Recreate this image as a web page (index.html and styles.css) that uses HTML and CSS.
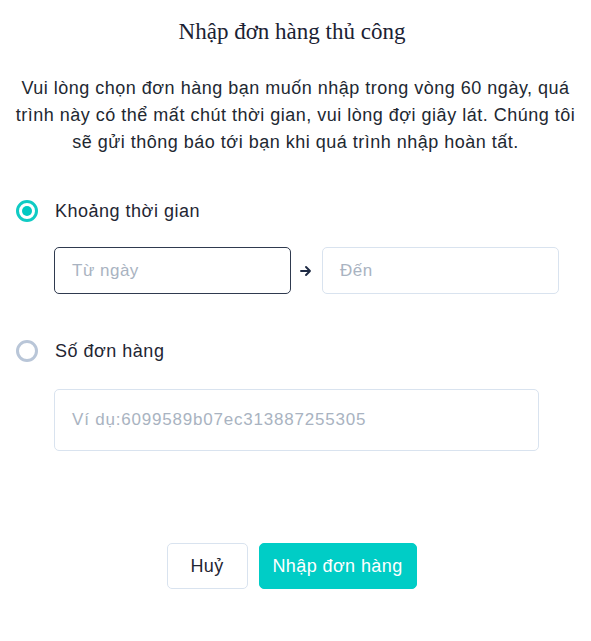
FILE: index.html
```html
<!DOCTYPE html>
<html lang="vi">
<head>
<meta charset="utf-8">
<link rel="stylesheet" href="styles.css">
</head>
<body>
<div class="dialog">
  <h1 class="title">Nhập đơn hàng thủ công</h1>
  <p class="desc">Vui lòng chọn đơn hàng bạn muốn nhập trong vòng 60 ngày, quá trình này có thể mất chút thời gian, vui lòng đợi giây lát. Chúng tôi sẽ gửi thông báo tới bạn khi quá trình nhập hoàn tất.</p>

  <div class="option">
    <span class="radio checked"></span>
    <span class="label">Khoảng thời gian</span>
  </div>
  <div class="range">
    <div class="input focused"><span class="ph">Từ ngày</span></div>
    <svg class="arrow" width="12" height="12" viewBox="0 0 12 12"><path d="M1 6h9M6 2l4 4-4 4" fill="none" stroke="#1e2a44" stroke-width="1.9" stroke-linecap="round" stroke-linejoin="round"/></svg>
    <div class="input"><span class="ph">Đến</span></div>
  </div>

  <div class="option second">
    <span class="radio"></span>
    <span class="label">Số đơn hàng</span>
  </div>
  <div class="order">
    <div class="input tall"><span class="ph wide">Ví dụ:6099589b07ec313887255305</span></div>
  </div>

  <div class="actions">
    <button class="btn cancel">Huỷ</button>
    <button class="btn primary">Nhập đơn hàng</button>
  </div>
</div>
</body>
</html>
```

FILE: styles.css
```css
html, body {
  margin: 0;
  padding: 0;
  background: #ffffff;
}
.dialog {
  width: 591px;
  box-sizing: border-box;
  padding: 17px 14px 0 14px;
  font-family: "Liberation Sans", Arial, sans-serif;
  letter-spacing: 0.5px;
  color: #1f2633;
}
.title {
  margin: 0;
  padding-right: 7px;
  text-align: center;
  font-family: "Liberation Serif", "Times New Roman", serif;
  font-weight: normal;
  font-size: 23px;
  line-height: 30px;
  letter-spacing: 0;
  color: #1b2233;
}
.desc {
  margin: 28px 0 0 0;
  text-align: center;
  font-size: 18px;
  line-height: 27px;
  color: #222831;
}
.option {
  display: flex;
  align-items: center;
  gap: 17px;
  margin-top: 42px;
  height: 26px;
  padding-left: 2px;
}
.option.second {
  margin-top: 44px;
}
.radio {
  width: 22px;
  height: 22px;
  box-sizing: border-box;
  border-radius: 50%;
  border: 3px solid #b9c6d8;
  display: flex;
  align-items: center;
  justify-content: center;
}
.radio.checked {
  border-color: #10cbc4;
}
.radio.checked::after {
  content: "";
  width: 10px;
  height: 10px;
  border-radius: 50%;
  background: #00c9c2;
}
.label {
  font-size: 18px;
  color: #1f2633;
}
.range {
  display: flex;
  align-items: center;
  margin-top: 23px;
  padding-left: 40px;
}
.input {
  box-sizing: border-box;
  width: 237px;
  height: 47px;
  border: 1px solid #d9e3ef;
  border-radius: 5px;
  display: flex;
  align-items: center;
  padding-left: 17px;
  font-size: 17px;
}
.input.focused {
  border-color: #2f3a4f;
}
.arrow {
  margin: 0 10px 0 9px;
}
.ph {
  color: #a9b3c1;
}
.ph.wide {
  letter-spacing: 0.8px;
}
.order {
  margin-top: 25px;
  padding-left: 40px;
}
.input.tall {
  width: 485px;
  height: 62px;
}
.actions {
  display: flex;
  justify-content: center;
  gap: 11px;
  margin-top: 92px;
  padding-right: 8px;
}
.btn {
  box-sizing: border-box;
  height: 46px;
  border-radius: 5px;
  font-family: "Liberation Sans", Arial, sans-serif;
  letter-spacing: 0.4px;
  font-size: 18px;
  border: 1px solid #d9e3ef;
  background: #fff;
  color: #1f2633;
  padding: 0;
  white-space: nowrap;
}
.btn.cancel {
  width: 81px;
}
.btn.primary {
  background: #00cdc6;
  border-color: #00cdc6;
  color: #ffffff;
  width: 158px;
}
```
